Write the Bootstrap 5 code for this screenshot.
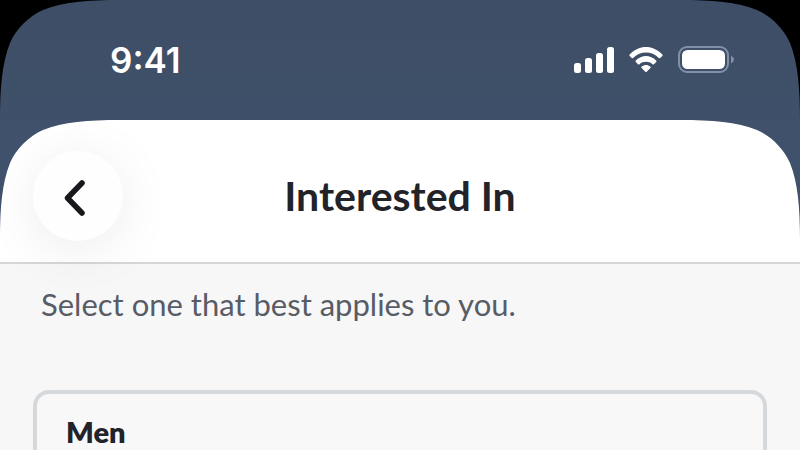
<!DOCTYPE html>
<html lang="en">
<head>
<meta charset="utf-8">
<meta name="viewport" content="width=device-width, initial-scale=1">
<title>Interested In</title>
<link href="https://cdn.jsdelivr.net/npm/bootstrap@5.3.0/dist/css/bootstrap.min.css" rel="stylesheet">
<style>
  body { font-family: Lato, "Open Sans", sans-serif; color: #212329; background: #f7f7f8; }
  .screen { height: 100vh; background: linear-gradient(#3e4e66, #40536e 260px); }
  .status-bar { height: 120px; padding: 0 66px 0 110px; color: #fff; }
  .clock { font: 600 35px/1 Inter, sans-serif; }
  .status-icons { gap: 14px; }
  .corner { position: absolute; top: 0; left: 0; width: 120px; height: 120px; fill: #000; }
  .corner-end { left: auto; right: 0; transform: scaleX(-1); }
  .sheet { background: #f7f7f8; }
  .sheet > .corner { fill: #40516b; }
  .sheet-header { height: 144px; padding: 10px 33px 0; background: #fff; border-bottom: 2px solid #d5d6d8; display: grid; grid-template-columns: 90px 1fr 90px; }
  .back { width: 90px; height: 90px; background: #fefefe; color: #17181b; box-shadow: 0 8px 56px rgba(0, 0, 0, .08); }
  .back:hover { background: #fafafa; }
  .title { font-size: 41px; font-weight: 700; line-height: 48px; }
  .hint { font-size: 31px; line-height: 36px; color: #585c65; margin: 22px 8px 68px; }
  .content { padding: 0 33px; }
  .option { height: 136px; padding: 20px 29px; font-size: 29px; line-height: 36px; font-weight: 800; color: #212329; border: 4px solid #d6d9db; border-radius: 16px; background: #f8f8f9; }
</style>
<script src="https://cdn.jsdelivr.net/npm/bootstrap@5.3.0/dist/js/bootstrap.bundle.min.js"></script>
</head>
<body>
<div class="screen d-flex flex-column position-relative overflow-hidden">
  <div class="status-bar d-flex align-items-center justify-content-between flex-shrink-0">
    <time class="clock">9:41</time>
    <div class="status-icons d-flex align-items-center">
      <svg width="41" height="28" viewBox="0 0 41 28" fill="#fff" role="img" aria-label="Cellular signal">
        <rect x="0" y="17" width="7" height="10" rx="2.500"/><rect x="11" y="12" width="7" height="15" rx="2.500"/><rect x="22" y="7" width="7" height="20" rx="2.500"/><rect x="33" y="1" width="7" height="26" rx="2.500"/>
      </svg>
      <svg width="35" height="28" viewBox="0 0 35 28" fill="#fff" role="img" aria-label="Wi-Fi">
        <path d="M.7 8.500C10-1.600 24-1.600 33.300 8.500Q34 9.300 33.300 10L31.300 11.900Q30.500 12.600 29.800 11.900C22.500 4.700 11.500 4.700 4.200 11.900Q3.500 12.600 2.700 11.900L.7 10Q0 9.300 .7 8.500Z"/>
        <path d="M6.800 14.500C12.800 8.400 21.200 8.400 27.200 14.500Q27.900 15.300 27.200 16L25 18.200Q24.200 18.900 23.500 18.200C19.900 15 14.100 15 10.500 18.200Q9.800 18.900 9 18.200L6.800 16Q6.100 15.300 6.800 14.500Z"/>
        <path d="M12.700 20.500C15.400 18.400 18.600 18.400 21.300 20.500Q22.200 21.200 21.400 22L17.700 25.700Q17 26.300 16.300 25.700L12.600 22Q11.800 21.200 12.700 20.500Z"/>
      </svg>
      <svg width="56" height="28" viewBox="0 0 56 28" role="img" aria-label="Battery full">
        <rect x="1" y="1" width="49" height="25" rx="8" fill="none" stroke="#8290a8" stroke-width="2"/><rect x="4" y="4" width="43" height="19" rx="5.500" fill="#fff"/><path d="M53 9.500Q59 13.500 53 17.500Z" fill="#8290a8"/>
      </svg>
    </div>
  </div>
  <svg class="corner" viewBox="0 0 120 120" aria-hidden="true"><path d="M0 0H120C88 0 63 2 43 10C29 16 16 29 10 43C2 63 0 88 0 120Z"/></svg>
  <svg class="corner corner-end" viewBox="0 0 120 120" aria-hidden="true"><path d="M0 0H120C88 0 63 2 43 10C29 16 16 29 10 43C2 63 0 88 0 120Z"/></svg>
  <div class="sheet position-relative flex-grow-1 overflow-hidden">
    <header class="sheet-header align-items-center">
      <button type="button" class="back btn border-0 rounded-circle p-0 d-flex align-items-center justify-content-center" aria-label="Back">
        <svg width="30" height="40" viewBox="0 0 30 40" fill="none" stroke="currentColor" stroke-width="5.500" stroke-linecap="round" stroke-linejoin="round" aria-hidden="true"><path d="M19 7L4.500 22L19 37"/></svg>
      </button>
      <h1 class="title text-center m-0">Interested In</h1>
    </header>
    <svg class="corner" viewBox="0 0 120 120" aria-hidden="true"><path d="M0 0H120C88 0 63 2 43 10C29 16 16 29 10 43C2 63 0 88 0 120Z"/></svg>
    <svg class="corner corner-end" viewBox="0 0 120 120" aria-hidden="true"><path d="M0 0H120C88 0 63 2 43 10C29 16 16 29 10 43C2 63 0 88 0 120Z"/></svg>
    <main class="content">
      <p class="hint">Select one that best applies to you.</p>
      <button type="button" class="option d-flex align-items-start w-100 text-start">Men</button>
    </main>
  </div>
</div>
</body>
</html>
